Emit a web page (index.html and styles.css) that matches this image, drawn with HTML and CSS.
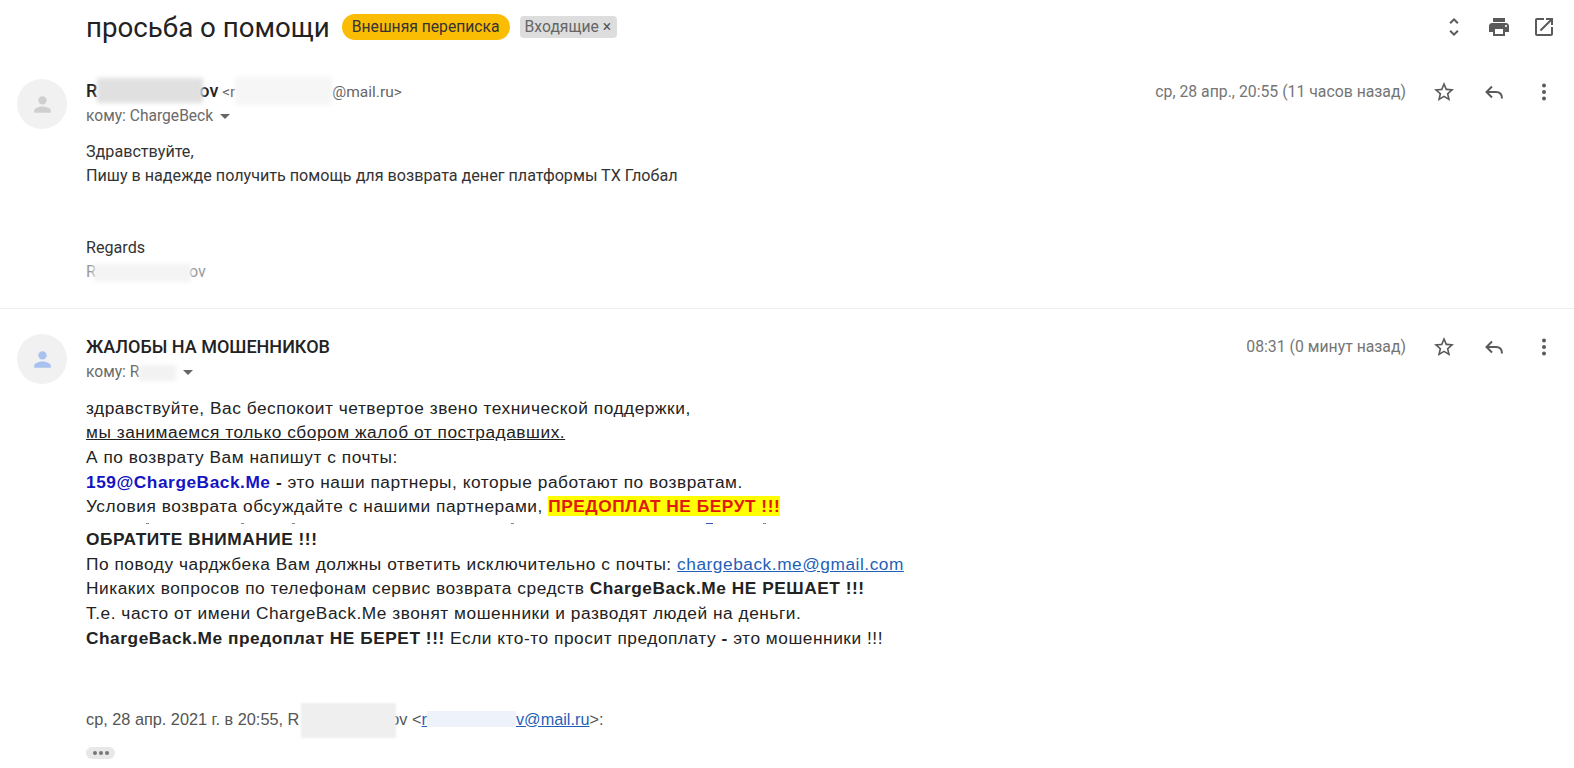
FILE: index.html
```html
<!DOCTYPE html>
<html lang="ru">
<head>
    <meta charset="UTF-8">
    <title>просьба о помощи</title>
    <link rel="stylesheet" href="styles.css">
</head>
<body>
    <div class="subject-row">
        <h1 class="subject">просьба о помощи</h1>
        <span class="tag tag-external">Внешняя переписка</span>
        <span class="tag tag-inbox">Входящие <span class="tag-x">×</span></span>
        <div class="top-icons">
            <svg class="icon" viewBox="0 0 24 24"><path d="M12 5.83L15.17 9l1.41-1.41L12 3 7.41 7.59 8.83 9 12 5.83zm0 12.34L8.83 15l-1.41 1.41L12 21l4.59-4.59L15.17 15 12 18.17z"/></svg>
            <svg class="icon" viewBox="0 0 24 24"><path d="M19 8H5c-1.66 0-3 1.34-3 3v6h4v4h12v-4h4v-6c0-1.66-1.34-3-3-3zm-3 11H8v-5h8v5zm3-7c-.55 0-1-.45-1-1s.45-1 1-1 1 .45 1 1-.45 1-1 1zm-1-9H6v4h12V3z"/></svg>
            <svg class="icon" viewBox="0 0 24 24"><path d="M19 19H5V5h7V3H5c-1.11 0-2 .9-2 2v14c0 1.1.89 2 2 2h14c1.1 0 2-.9 2-2v-7h-2v7zM14 3v2h3.59l-9.83 9.83 1.41 1.41L19 6.41V10h2V3h-7z"/></svg>
        </div>
    </div>

    <div class="message first">
        <div class="avatar">
            <svg viewBox="0 0 24 24"><circle cx="12" cy="8" r="4"/><path d="M12 14c-3.5 0-8 1.6-8 4v2h16v-2c0-2.400-4.500-4-8-4z"/></svg>
        </div>
        <div class="message-main">
            <div class="message-head">
                <div class="head-text">
                    <div class="sender"><b class="sender-name">R<span class="blur name-blur"></span>ov</b> <span class="sender-mail">&lt;r<span class="blur mail-blur"></span>@mail.ru&gt;</span></div>
                    <div class="to">кому: ChargeBeck <span class="caret"></span></div>
                </div>
                <div class="date">ср, 28 апр., 20:55 (11 часов назад)</div>
                <div class="msg-icons">
                    <svg class="icon" viewBox="0 0 24 24"><path d="M22 9.24l-7.19-.62L12 2 9.19 8.63 2 9.24l5.46 4.73L5.82 21 12 17.27 18.18 21l-1.63-7.03L22 9.24zM12 15.4l-3.76 2.27 1-4.28-3.32-2.88 4.38-.38L12 6.1l1.710 4.04 4.38.38-3.32 2.88 1 4.28L12 15.4z"/></svg>
                    <svg class="icon" viewBox="0 0 24 24"><path class="reply" d="M10 6.500L4.500 12l5.500 5.500M4.500 12H14c3.500 0 6 2 6 6.500"/></svg>
                    <svg class="icon" viewBox="0 0 24 24"><circle cx="12" cy="5.500" r="2"/><circle cx="12" cy="12" r="2"/><circle cx="12" cy="18.500" r="2"/></svg>
                </div>
            </div>
            <div class="body-short">
                <div>Здравствуйте,</div>
                <div>Пишу в надежде получить помощь для возврата денег платформы ТХ Глобал</div>
                <div class="signature">Regards</div>
                <div class="muted">R<span class="blur sign-blur"></span>ov</div>
            </div>
        </div>
    </div>

    <div class="message second">
        <div class="avatar avatar-blue">
            <svg viewBox="0 0 24 24"><circle cx="12" cy="8" r="4"/><path d="M12 14c-3.5 0-8 1.6-8 4v2h16v-2c0-2.400-4.500-4-8-4z"/></svg>
        </div>
        <div class="message-main">
            <div class="message-head">
                <div class="head-text">
                    <div class="sender"><b class="sender-name">ЖАЛОБЫ НА МОШЕННИКОВ</b></div>
                    <div class="to">кому: R<span class="blur to-blur"></span> <span class="caret"></span></div>
                </div>
                <div class="date">08:31 (0 минут назад)</div>
                <div class="msg-icons">
                    <svg class="icon" viewBox="0 0 24 24"><path d="M22 9.24l-7.19-.62L12 2 9.19 8.63 2 9.24l5.46 4.73L5.82 21 12 17.27 18.18 21l-1.63-7.03L22 9.24zM12 15.4l-3.76 2.27 1-4.28-3.32-2.88 4.38-.38L12 6.1l1.710 4.04 4.38.38-3.32 2.88 1 4.28L12 15.4z"/></svg>
                    <svg class="icon" viewBox="0 0 24 24"><path class="reply" d="M10 6.500L4.500 12l5.500 5.500M4.500 12H14c3.500 0 6 2 6 6.500"/></svg>
                    <svg class="icon" viewBox="0 0 24 24"><circle cx="12" cy="5.500" r="2"/><circle cx="12" cy="12" r="2"/><circle cx="12" cy="18.500" r="2"/></svg>
                </div>
            </div>
            <div class="body-long">
                <div>здравствуйте, Вас беспокоит четвертое звено технической поддержки,</div>
                <div><u>мы занимаемся только сбором жалоб от пострадавших.</u></div>
                <div>А по возврату Вам напишут с почты:</div>
                <div><b class="blue">159@ChargeBack.Me</b> <b>-</b> это наши партнеры, которые работают по возвратам.</div>
                <div>Условия возврата обсуждайте с нашими партнерами, <b class="alert">ПРЕДОПЛАТ НЕ БЕРУТ !!!</b></div>
                <div class="cut-line"><i></i><i></i><i></i><i></i><i class="speck-blue"></i><i></i></div>
                <div><b>ОБРАТИТЕ ВНИМАНИЕ !!!</b></div>
                <div>По поводу чарджбека Вам должны ответить исключительно с почты: <a href="#">chargeback.me@gmail.com</a></div>
                <div>Никаких вопросов по телефонам сервис возврата средств <b>ChargeBack.Me НЕ РЕШАЕТ !!!</b></div>
                <div>Т.е. часто от имени ChargeBack.Me звонят мошенники и разводят людей на деньги.</div>
                <div><b>ChargeBack.Me предоплат НЕ БЕРЕТ !!!</b> Если кто-то просит предоплату <b>-</b> это мошенники !!!</div>
            </div>
            <div class="quote-line">ср, 28 апр. 2021 г. в 20:55, R<span class="blur quote-blur"></span>ov &lt;<a href="#">r<span class="blur-link"></span>v@mail.ru</a>&gt;:</div>
            <div class="more-dots"><span></span><span></span><span></span></div>
        </div>
    </div>
</body>
</html>
```

FILE: styles.css
```css
body {
    margin: 0;
    background-color: #fff;
    color: #222;
    font-family: Roboto, "Liberation Sans", sans-serif;
    height: 768px;
    overflow: hidden;
}

.icon {
    width: 24px;
    height: 24px;
    fill: #5a5a5a;
    display: block;
}

.reply {
    fill: none;
    stroke: #5a5a5a;
    stroke-width: 2;
}

/* строка с темой письма */
.subject-row {
    display: flex;
    align-items: center;
    height: 54px;
    padding-left: 86px;
    padding-right: 18px;
}

.subject {
    margin: 0;
    font-size: 27.7px;
    font-weight: 400;
    color: #222;
    margin-right: 12px;
}

.tag {
    font-size: 15.7px;
    line-height: 22px;
    white-space: nowrap;
}

.tag-external {
    background-color: #fbbc04;
    color: #333;
    border-radius: 13px;
    padding: 2px 10px;
    margin-right: 10px;
}

.tag-inbox {
    background-color: #ddd;
    color: #666;
    border-radius: 4px;
    padding: 0 6px 0 5px;
}

.tag-x {
    color: #555;
}

.top-icons {
    margin-left: auto;
    display: flex;
    gap: 21px;
}

/* письмо */
.message {
    display: flex;
    padding-left: 17px;
    padding-right: 18px;
}

.first {
    padding-top: 25px;
    height: 229px;
    border-bottom: 1px solid #eee;
}

.second {
    padding-top: 25px;
}

.avatar {
    width: 50px;
    height: 50px;
    border-radius: 50%;
    background-color: #f1f1f1;
    display: flex;
    align-items: center;
    justify-content: center;
    flex-shrink: 0;
    margin-right: 19px;
}

.avatar svg {
    width: 25px;
    height: 25px;
    fill: #cfcfcf;
}

.avatar-blue svg {
    fill: #a8c1ee;
}

.message-main {
    flex: 1;
}

.message-head {
    display: flex;
}

.head-text {
    flex: 1;
}

.sender {
    font-size: 15.5px;
    line-height: 23px;
    color: #666;
}

.second .head-text {
    padding-top: 1px;
}

.second .sender {
    line-height: 24px;
}

.sender-name {
    font-size: 18px;
    font-weight: 500;
    color: #222;
}

.sender-mail {
    color: #666;
}

.to {
    font-size: 15.6px;
    line-height: 25px;
    color: #6a6a6a;
}

.caret {
    display: inline-block;
    margin-left: 3px;
    border-left: 5px solid transparent;
    border-right: 5px solid transparent;
    border-top: 5px solid #666;
    vertical-align: 2px;
}

.date {
    font-size: 15.8px;
    line-height: 24px;
    color: #757575;
    margin-top: 1px;
    margin-right: 26px;
}

.msg-icons {
    display: flex;
    gap: 26px;
    padding-top: 1px;
}

/* размытые куски, поверх текста */
.blur {
    display: inline-block;
    background-color: #ececec;
    filter: blur(2px);
    vertical-align: middle;
}

.name-blur {
    width: 106px;
    height: 25px;
    margin: -7px -4px -4px 0;
    background-color: #e0e0e0;
}

.mail-blur {
    width: 97px;
    height: 28px;
    margin: -8px 0 -4px 0;
    background-color: #f6f6f6;
}

.sign-blur {
    width: 97px;
    height: 18px;
    margin: -4px -2px;
    background-color: #f4f4f4;
}

.to-blur {
    width: 37px;
    height: 16px;
    margin: -4px 0;
    background-color: #f2f2f2;
}

.quote-blur {
    width: 95px;
    height: 35px;
    margin: -10px -6px -10px 2px;
    filter: blur(1px);
    background-color: #efefef;
}

.blur-link {
    display: inline-block;
    width: 89px;
    height: 16px;
    background-color: #eef3fb;
    vertical-align: -2px;
}

.body-short {
    font-size: 16.15px;
    line-height: 24px;
    color: #333;
    margin-top: 11px;
}

.signature {
    margin-top: 48px;
}

.muted {
    color: #999;
}

.body-long {
    font-family: "Liberation Sans", Arial, sans-serif;
    font-size: 17.3px;
    letter-spacing: 0.54px;
    line-height: 24.7px;
    color: #222;
    margin-top: 10.5px;
}

.blue {
    color: #1414c4;
}

.alert {
    background-color: #ffff00;
    color: #e01a10;
}

a {
    color: #1f5fb8;
}

/* обрезанная строка: видны только верхушки букв */
.cut-line {
    display: flex;
    height: 2px;
    margin-top: 4px;
    margin-bottom: 2px;
}

.cut-line i {
    width: 3px;
    height: 1px;
    background-color: #888;
}

.cut-line i:nth-child(1) { margin-left: 60px; }
.cut-line i:nth-child(2) { margin-left: 92px; }
.cut-line i:nth-child(3) { margin-left: 48px; }
.cut-line i:nth-child(4) { margin-left: 216px; }
.cut-line i:nth-child(5) { margin-left: 192px; }
.cut-line i:nth-child(6) { margin-left: 50px; }

.cut-line .speck-blue {
    width: 7px;
    background-color: #3355bb;
}

.quote-line {
    font-family: "Liberation Sans", Arial, sans-serif;
    font-size: 16.3px;
    line-height: 24px;
    color: #555;
    margin-top: 56px;
}

.more-dots {
    display: flex;
    align-items: center;
    justify-content: center;
    gap: 2px;
    width: 29px;
    height: 12px;
    margin-top: 16px;
    background-color: #e8e8e8;
    border-radius: 6px;
}

.more-dots span {
    width: 4px;
    height: 4px;
    background-color: #777;
    border-radius: 50%;
}
```
